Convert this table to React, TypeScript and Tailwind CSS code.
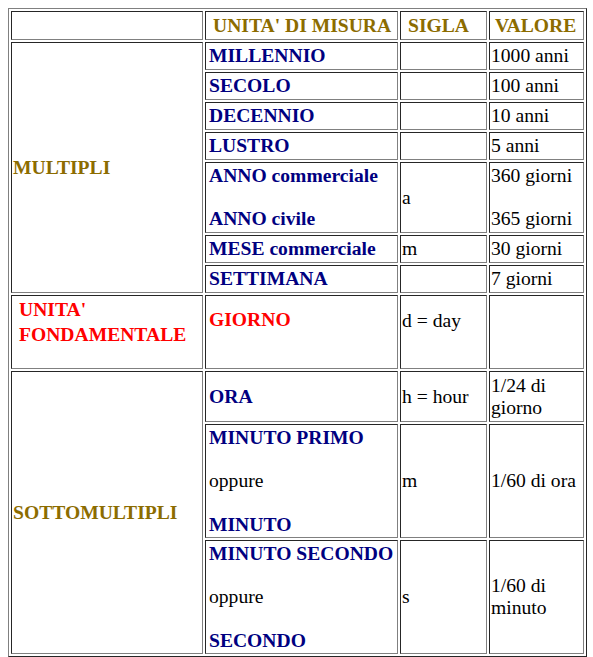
import React from "react";

const cell =
  "border border-t-[#262626] border-l-[#262626] border-r-[#808080] border-b-[#808080] p-px align-middle";
const hdr = "text-[#8c6c00] font-bold whitespace-nowrap";
const blue = "text-[#000080] font-bold whitespace-nowrap";
const red = "text-[#ff0000] font-bold whitespace-nowrap";

export default function App() {
  return (
    <div className="p-2 bg-white min-h-[657px] font-['Liberation_Serif','Times_New_Roman',serif] text-[19.6px] leading-[21.6px] text-black">
      <table className="table-fixed w-[579px] border-separate border-spacing-[2px] border border-t-[#808080] border-l-[#808080] border-r-[#262626] border-b-[#262626]">
        <colgroup>
          <col className="w-[192px]" />
          <col className="w-[193px]" />
          <col className="w-[87px]" />
          <col className="w-[95px]" />
        </colgroup>
        <tbody>
          <tr className="h-[29px]">
            <td className={cell}></td>
            <td className={`${cell} pl-[7px] ${hdr}`}>UNITA' DI MISURA</td>
            <td className={`${cell} pl-[7px] ${hdr}`}>SIGLA</td>
            <td className={`${cell} pl-[5px] ${hdr}`}>VALORE</td>
          </tr>
          <tr className="h-[28px]">
            <td rowSpan={7} className={`${cell} ${hdr}`}>
              MULTIPLI
            </td>
            <td className={`${cell} pl-[3px] ${blue}`}>MILLENNIO</td>
            <td className={cell}></td>
            <td className={cell}>1000 anni</td>
          </tr>
          <tr className="h-[28px]">
            <td className={`${cell} pl-[3px] ${blue}`}>SECOLO</td>
            <td className={cell}></td>
            <td className={cell}>100 anni</td>
          </tr>
          <tr className="h-[28px]">
            <td className={`${cell} pl-[3px] ${blue}`}>DECENNIO</td>
            <td className={cell}></td>
            <td className={cell}>10 anni</td>
          </tr>
          <tr className="h-[28px]">
            <td className={`${cell} pl-[3px] ${blue}`}>LUSTRO</td>
            <td className={cell}></td>
            <td className={cell}>5 anni</td>
          </tr>
          <tr className="h-[71px]">
            <td className={`${cell} pl-[3px] ${blue} leading-[21.5px]`}>
              ANNO commerciale
              <br />
              <br />
              ANNO civile
            </td>
            <td className={cell}>a</td>
            <td className={`${cell} leading-[21.5px]`}>
              360 giorni
              <br />
              <br />
              365 giorni
            </td>
          </tr>
          <tr className="h-[28px]">
            <td className={`${cell} pl-[3px] ${blue}`}>MESE commerciale</td>
            <td className={cell}>m</td>
            <td className={cell}>30 giorni</td>
          </tr>
          <tr className="h-[28px]">
            <td className={`${cell} pl-[3px] ${blue}`}>SETTIMANA</td>
            <td className={cell}></td>
            <td className={cell}>7 giorni</td>
          </tr>
          <tr className="h-[74px]">
            <td className={`${cell} !align-top pl-[7px] leading-[25px] ${red}`}>
              UNITA'
              <br />
              FONDAMENTALE
            </td>
            <td className={`${cell} !align-top pt-[13px] pl-[3px] ${red}`}>GIORNO</td>
            <td className={`${cell} !align-top pt-[14px]`}>d = day</td>
            <td className={cell}></td>
          </tr>
          <tr className="h-[51px]">
            <td rowSpan={3} className={`${cell} ${hdr}`}>
              SOTTOMULTIPLI
            </td>
            <td className={`${cell} pl-[3px] ${blue}`}>ORA</td>
            <td className={`${cell} whitespace-nowrap`}>h = hour</td>
            <td className={cell}>
              1/24 di
              <br />
              giorno
            </td>
          </tr>
          <tr className="h-[114px]">
            <td className={`${cell} pl-[3px] leading-[21.75px]`}>
              <span className={blue}>MINUTO PRIMO</span>
              <br />
              <br />
              oppure
              <br />
              <br />
              <span className={blue}>MINUTO</span>
            </td>
            <td className={cell}>m</td>
            <td className={`${cell} whitespace-nowrap`}>1/60 di ora</td>
          </tr>
          <tr className="h-[114px]">
            <td className={`${cell} pl-[3px] leading-[21.75px]`}>
              <span className={blue}>MINUTO SECONDO</span>
              <br />
              <br />
              oppure
              <br />
              <br />
              <span className={blue}>SECONDO</span>
            </td>
            <td className={cell}>s</td>
            <td className={cell}>
              1/60 di
              <br />
              minuto
            </td>
          </tr>
        </tbody>
      </table>
    </div>
  );
}
